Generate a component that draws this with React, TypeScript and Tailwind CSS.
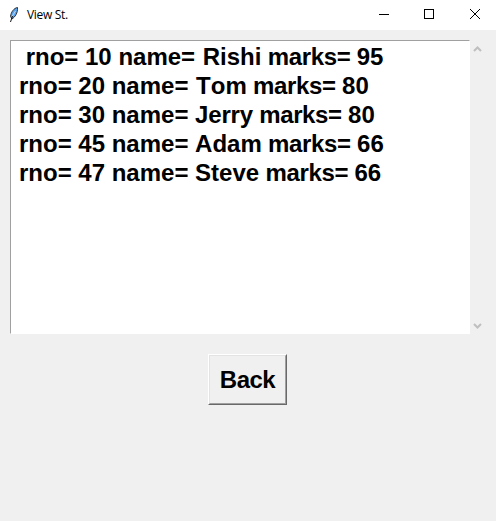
const rows = [
  { rno: 10, name: "Rishi", marks: 95, fit: "ml-px" },
  { rno: 20, name: "Tom", marks: 80, fit: "ml-px" },
  { rno: 30, name: "Jerry", marks: 80, fit: "tracking-[-0.2px]" },
  { rno: 45, name: "Adam", marks: 66, fit: "" },
  { rno: 47, name: "Steve", marks: 66, fit: "" },
];

export default function App() {
  return (
    <div className="flex h-[521px] w-[496px] flex-col overflow-hidden bg-[#f0f0f0] font-['Liberation_Sans',Arial,sans-serif] text-black">
      <header className="flex h-[30px] shrink-0 items-center bg-white">
        <svg className="ml-1.5 h-[18px] w-4" viewBox="0 0 16 18">
          <path d="M11.500 1.500C8 2 5 6 4.500 10.500L6 13c3-2 6-6 5.500-11.500z" fill="#5ba3ee" stroke="#222" strokeWidth="0.9" />
          <path d="M9.500 5L6 10.500" stroke="#b7d8f5" fill="none" />
          <path d="M6.500 10L4.500 16" stroke="#111" fill="none" />
        </svg>
        <h1 className="ml-[5px] flex-1 font-['Open_Sans',sans-serif] text-[12px] tracking-[-0.3px]">View St.</h1>
        <svg width="130" height="30" viewBox="0 0 130 30" fill="none" stroke="#000" shapeRendering="crispEdges">
          <path d="M13 14.500h10M58.500 9.500h9v9h-9z" />
          <path d="M104 9l10 10M114 9l-10 10" shapeRendering="auto" />
        </svg>
      </header>
      <main className="flex flex-col items-center pt-2.5">
        <div className="flex w-full pl-2.5">
          <div className="h-[294px] w-[460px] border border-t-[#a0a0a0] border-l-[#a0a0a0] border-r-white border-b-white bg-white pt-px pl-2 text-[24px] leading-[29px] font-bold whitespace-pre [font-kerning:none]">
            {rows.map((r, i) => (
              <div key={r.rno}>
                {(i === 0 ? " " : "") + `rno= ${r.rno} name= `}
                <span className={r.fit}>{r.name}</span>
                <span className="tracking-[-0.35px]">{" marks= "}</span>
                {r.marks}
              </div>
            ))}
          </div>
          <svg width="17" height="294" viewBox="0 0 17 294" fill="none" stroke="#bfbfbf" strokeWidth="2">
            <path d="M4 11l3.500-3.500L11 11M4 284l3.500 3.500L11 284" />
          </svg>
        </div>
        <button className="mt-5 mr-px h-[51px] w-[79px] border border-t-white border-l-white border-r-[#696969] border-b-[#696969] text-[24px] font-bold">
          <span className="flex h-full items-center justify-center border border-t-[#e3e3e3] border-l-[#e3e3e3] border-r-[#a0a0a0] border-b-[#a0a0a0] tracking-[-0.5px]">Back</span>
        </button>
      </main>
    </div>
  );
}
